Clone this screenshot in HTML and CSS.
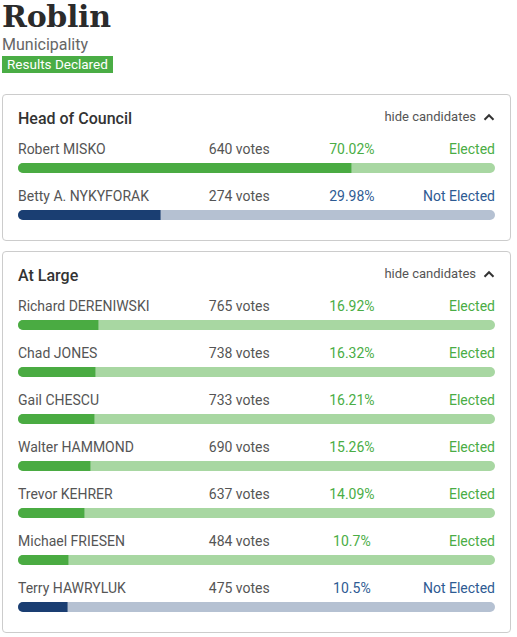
FILE: index.html
```html
<!DOCTYPE html>
<html>
<head>
<meta charset="utf-8">
<link rel="stylesheet" href="styles.css">
</head>
<body>
<div class="page">
  <header class="head">
    <h1 class="title">Roblin</h1>
    <div class="subtitle">Municipality</div>
    <span class="badge">Results Declared</span>
  </header>

  <section class="card">
    <div class="card-head">
      <h2 class="card-title">Head of Council</h2>
      <span class="toggle">hide candidates <svg class="chev" viewBox="0 0 12 8" width="12" height="8"><path d="M1.5 6.8 L6 2.2 L10.5 6.8" fill="none" stroke="#333" stroke-width="2"/></svg></span>
    </div>
    <div class="row win">
      <div class="line"><span class="name">Robert MISKO</span><span class="votes">640 votes</span><span class="pct">70.02%</span><span class="status">Elected</span></div>
      <div class="bar"><div class="fill" style="width:70.02%"></div></div>
    </div>
    <div class="row lose">
      <div class="line"><span class="name">Betty A. NYKYFORAK</span><span class="votes">274 votes</span><span class="pct">29.98%</span><span class="status">Not Elected</span></div>
      <div class="bar"><div class="fill" style="width:29.98%"></div></div>
    </div>
  </section>

  <section class="card">
    <div class="card-head">
      <h2 class="card-title">At Large</h2>
      <span class="toggle">hide candidates <svg class="chev" viewBox="0 0 12 8" width="12" height="8"><path d="M1.5 6.8 L6 2.2 L10.5 6.8" fill="none" stroke="#333" stroke-width="2"/></svg></span>
    </div>
    <div class="row win">
      <div class="line"><span class="name">Richard DERENIWSKI</span><span class="votes">765 votes</span><span class="pct">16.92%</span><span class="status">Elected</span></div>
      <div class="bar"><div class="fill" style="width:16.92%"></div></div>
    </div>
    <div class="row win">
      <div class="line"><span class="name">Chad JONES</span><span class="votes">738 votes</span><span class="pct">16.32%</span><span class="status">Elected</span></div>
      <div class="bar"><div class="fill" style="width:16.32%"></div></div>
    </div>
    <div class="row win">
      <div class="line"><span class="name">Gail CHESCU</span><span class="votes">733 votes</span><span class="pct">16.21%</span><span class="status">Elected</span></div>
      <div class="bar"><div class="fill" style="width:16.21%"></div></div>
    </div>
    <div class="row win">
      <div class="line"><span class="name">Walter HAMMOND</span><span class="votes">690 votes</span><span class="pct">15.26%</span><span class="status">Elected</span></div>
      <div class="bar"><div class="fill" style="width:15.26%"></div></div>
    </div>
    <div class="row win">
      <div class="line"><span class="name">Trevor KEHRER</span><span class="votes">637 votes</span><span class="pct">14.09%</span><span class="status">Elected</span></div>
      <div class="bar"><div class="fill" style="width:14.09%"></div></div>
    </div>
    <div class="row win">
      <div class="line"><span class="name">Michael FRIESEN</span><span class="votes">484 votes</span><span class="pct">10.7%</span><span class="status">Elected</span></div>
      <div class="bar"><div class="fill" style="width:10.7%"></div></div>
    </div>
    <div class="row lose">
      <div class="line"><span class="name">Terry HAWRYLUK</span><span class="votes">475 votes</span><span class="pct">10.5%</span><span class="status">Not Elected</span></div>
      <div class="bar"><div class="fill" style="width:10.5%"></div></div>
    </div>
  </section>
</div>
</body>
</html>
```

FILE: styles.css
```css
* { box-sizing: border-box; }
body {
  margin: 0;
  font-family: Roboto, "Liberation Sans", sans-serif;
  color: #333;
  background: #fff;
}
.page {
  padding: 0 6px 0 2px;
}
.head {
  display: flex;
  flex-direction: column;
  align-items: flex-start;
}
.title {
  margin: 0;
  font-family: "DejaVu Serif", serif;
  font-weight: bold;
  font-size: 30px;
  line-height: 34px;
  color: #2b2b2b;
  letter-spacing: -0.3px;
}
.subtitle {
  font-size: 16px;
  line-height: 19px;
  color: #666;
  margin-top: 1px;
}
.badge {
  display: inline-block;
  background: #4aad45;
  color: #fff;
  font-size: 13.5px;
  line-height: 17px;
  padding: 0 5px 0 5px;
  margin-top: 2px;
}
.card {
  border: 1px solid #ccc;
  border-radius: 4px;
  padding: 11px 15px 20px 15px;
  margin-top: 21px;
}
.card + .card { margin-top: 10px; }
.card-head {
  display: flex;
  justify-content: space-between;
  align-items: center;
  height: 24px;
  margin-bottom: 9px;
}
.card-title {
  margin: 0;
  font-size: 16px;
  font-weight: 500;
  color: #333;
}
.toggle {
  font-size: 13px;
  color: #555;
  display: flex;
  align-items: center;
  gap: 7px;
  margin-top: -3px;
}
.chev { display: block; }
.row + .row { margin-top: 13px; }
.line {
  display: grid;
  grid-template-columns: 40% 20% 20% 20%;
  font-size: 14px;
  line-height: 20px;
  color: #555;
}
.pct { text-align: center; }
.status { text-align: right; }
.win .pct, .win .status { color: #4aad45; }
.lose .pct, .lose .status { color: #2e5b93; }
.bar {
  height: 10px;
  border-radius: 5px;
  margin-top: 4px;
  overflow: hidden;
}
.fill { height: 100%; border-right: 1px solid rgba(255,255,255,0.3); }
.win .bar { background: #a8d7a2; }
.win .fill { background: #4aab42; }
.lose .bar { background: #b5c1d2; }
.lose .fill { background: #1a3e72; }
```
